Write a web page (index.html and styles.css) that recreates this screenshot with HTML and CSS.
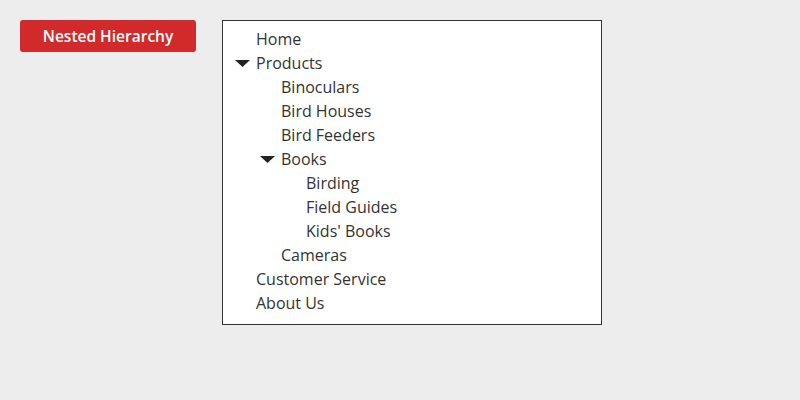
FILE: index.html
```html
<!DOCTYPE html>
<html lang="en">
<head>
<meta charset="utf-8">
<title>Nested Hierarchy</title>
<link rel="stylesheet" href="styles.css">
</head>
<body>
<div class="page">
  <div class="badge">Nested Hierarchy</div>
  <ul class="tree" role="tree">
    <li class="row d0"><span class="tog"></span><span class="label">Home</span></li>
    <li class="row d0"><svg class="tog" viewBox="0 0 15 7" aria-hidden="true"><path d="M0 0H15L7.5 7Z"/></svg><span class="label">Products</span></li>
    <li class="row d1"><span class="tog"></span><span class="label">Binoculars</span></li>
    <li class="row d1"><span class="tog"></span><span class="label">Bird Houses</span></li>
    <li class="row d1"><span class="tog"></span><span class="label">Bird Feeders</span></li>
    <li class="row d1"><svg class="tog" viewBox="0 0 15 7" aria-hidden="true"><path d="M0 0H15L7.5 7Z"/></svg><span class="label">Books</span></li>
    <li class="row d2"><span class="tog"></span><span class="label">Birding</span></li>
    <li class="row d2"><span class="tog"></span><span class="label">Field Guides</span></li>
    <li class="row d2"><span class="tog"></span><span class="label">Kids' Books</span></li>
    <li class="row d1"><span class="tog"></span><span class="label">Cameras</span></li>
    <li class="row d0"><span class="tog"></span><span class="label">Customer Service</span></li>
    <li class="row d0"><span class="tog"></span><span class="label">About Us</span></li>
  </ul>
</div>
</body>
</html>
```
FILE: styles.css
```css
html, body {
  margin: 0;
  padding: 0;
  background: #ededed;
}
body {
  font-family: "Open Sans", "Liberation Sans", sans-serif;
  color: #333;
}
.page {
  display: flex;
  align-items: flex-start;
  gap: 26px;
  padding: 20px;
}
.badge {
  width: 176px;
  height: 32px;
  box-sizing: border-box;
  background: #d22a2a;
  color: #fff;
  border-radius: 3px;
  font-size: 15.5px;
  font-weight: 600;
  display: flex;
  align-items: center;
  justify-content: center;
}
.tree {
  list-style: none;
  margin: 0;
  width: 380px;
  box-sizing: border-box;
  background: #fff;
  border: 1px solid #333;
  padding: 6px 0 9px 12px;
}
.row {
  display: flex;
  align-items: center;
  height: 24px;
  font-size: 16px;
  line-height: 24px;
  color: #333;
}
.d1 { padding-left: 25px; }
.d2 { padding-left: 50px; }
.tog {
  width: 15px;
  height: 7px;
  margin-right: 6px;
  flex: none;
  fill: #222;
}
svg.tog {
  margin-top: 1px;
}
```
